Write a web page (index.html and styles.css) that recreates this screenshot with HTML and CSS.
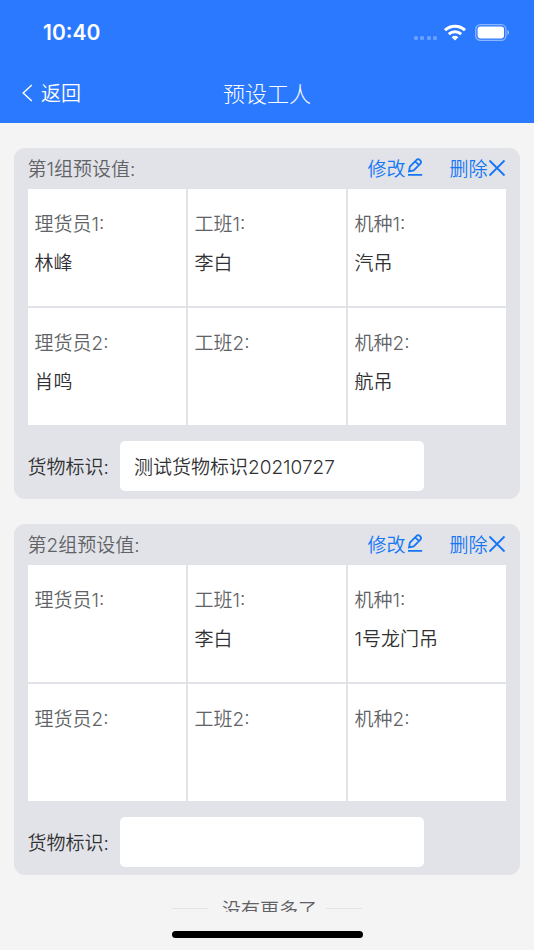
FILE: index.html
```html
<!DOCTYPE html>
<html lang="zh-CN">

<head>
    <meta charset="UTF-8">
    <meta name="viewport" content="width=device-width, initial-scale=1.0">
    <title>预设工人</title>
    <link rel="stylesheet" href="styles.css">
</head>

<body>
    <div id="app">
        <header class="header">
            <!-- 状态栏 -->
            <div class="status">
                <span class="time">10:40</span>
                <div class="status-icons">
                    <div class="dots"><i></i><i></i><i></i><i></i></div>
                    <svg class="wifi" viewBox="0 0 22 17" fill="none" stroke="#fff" stroke-width="3">
                        <path d="M1 6.2C6.6 .8 15.4 .8 21 6.2" />
                        <path d="M4.8 10.2C8.4 6.9 13.6 6.9 17.2 10.2" />
                        <path d="M7.7 13.3Q11 10.4 14.3 13.3L11 16.6Z" fill="#fff" stroke="none" />
                    </svg>
                    <svg class="battery" viewBox="0 0 35 17">
                        <rect x=".7" y=".7" width="30.2" height="15.6" rx="4.6" fill="none" stroke="#fff" stroke-opacity=".45" stroke-width="1.3" />
                        <rect x="2.6" y="2.6" width="26.4" height="11.8" rx="2.8" fill="#fff" />
                        <path d="M32.4 6v5c2.2-.8 2.2-4.2 0-5z" fill="#fff" fill-opacity=".5" />
                    </svg>
                </div>
            </div>
            <!-- 导航栏 -->
            <div class="nav">
                <a class="back">
                    <svg viewBox="0 0 11 18" fill="none" stroke="#fff" stroke-width="1.4">
                        <path d="M9.8 1L1.2 9l8.6 8" />
                    </svg>
                    <span>返回</span>
                </a>
                <h1>预设工人</h1>
            </div>
        </header>

        <main class="list">
            <section class="card">
                <div class="card-head">
                    <span class="title">第1组预设值:</span>
                    <a class="edit">修改<svg viewBox="0 0 16 18"><path d="M2.9 8.6L9.6 1.8Q11.1 .5 12.6 1.8L13.4 2.6Q14.7 4.1 13.4 5.6L6.7 12.4L2 13.4ZM8.3 3.4L11.8 6.9M1 16.8H15.2" /></svg></a>
                    <a class="del">删除<svg viewBox="0 0 18 18"><path d="M1.5 1.5L16.5 16.5M16.5 1.5L1.5 16.5" /></svg></a>
                </div>
                <div class="grid">
                    <div class="cell"><label>理货员1:</label><p>林峰</p></div>
                    <div class="cell"><label>工班1:</label><p>李白</p></div>
                    <div class="cell"><label>机种1:</label><p>汽吊</p></div>
                    <div class="cell"><label>理货员2:</label><p>肖鸣</p></div>
                    <div class="cell"><label>工班2:</label><p></p></div>
                    <div class="cell"><label>机种2:</label><p>航吊</p></div>
                </div>
                <div class="mark">
                    <span>货物标识:</span>
                    <div class="input">测试货物标识20210727</div>
                </div>
            </section>

            <section class="card">
                <div class="card-head">
                    <span class="title">第2组预设值:</span>
                    <a class="edit">修改<svg viewBox="0 0 16 18"><path d="M2.9 8.6L9.6 1.8Q11.1 .5 12.6 1.8L13.4 2.6Q14.7 4.1 13.4 5.6L6.7 12.4L2 13.4ZM8.3 3.4L11.8 6.9M1 16.8H15.2" /></svg></a>
                    <a class="del">删除<svg viewBox="0 0 18 18"><path d="M1.5 1.5L16.5 16.5M16.5 1.5L1.5 16.5" /></svg></a>
                </div>
                <div class="grid">
                    <div class="cell"><label>理货员1:</label><p></p></div>
                    <div class="cell"><label>工班1:</label><p>李白</p></div>
                    <div class="cell"><label>机种1:</label><p>1号龙门吊</p></div>
                    <div class="cell"><label>理货员2:</label><p></p></div>
                    <div class="cell"><label>工班2:</label><p></p></div>
                    <div class="cell"><label>机种2:</label><p></p></div>
                </div>
                <div class="mark">
                    <span>货物标识:</span>
                    <div class="input"></div>
                </div>
            </section>

            <div class="nomore"><span>没有更多了</span></div>
        </main>

        <div class="home-bar"></div>
    </div>
</body>

</html>
```
FILE: styles.css
```css
* {
    margin: 0;
    padding: 0;
    box-sizing: border-box;
}

body {
    font-family: Inter, "Noto Sans CJK SC", sans-serif;
    font-size: 19px;
    font-weight: 350;
    color: #303133;
    background-color: #f4f4f4;
}

#app {
    height: 950px;
    display: flex;
    flex-direction: column;
    overflow: hidden;
}

/* 头部 */
.header {
    height: 122.5px;
    flex-shrink: 0;
    color: #fff;
    background-color: #2b79ff;
}

.status {
    height: 64px;
    padding: 0 25px 0 43px;
    display: flex;
    justify-content: space-between;
    align-items: center;
}

.time {
    font-size: 21px;
    font-weight: 600;
}

.status-icons {
    display: flex;
    align-items: center;
}

.dots {
    display: flex;
    gap: 2.4px;
    margin: 11px 7px 0 0;
}

.dots i {
    width: 4px;
    height: 4px;
    border-radius: 1.5px;
    background-color: rgba(255, 255, 255, .3);
}

.wifi {
    width: 22px;
    height: 17px;
    margin-right: 9px;
}

.battery {
    width: 35px;
    height: 17px;
    margin-right: -1px;
}

.nav {
    height: 56px;
    padding: 0 22px;
    display: grid;
    grid-template-columns: 1fr auto 1fr;
    align-items: center;
}

.back {
    display: flex;
    align-items: center;
    gap: 8px;
    font-size: 20px;
}

.back svg {
    width: 11px;
    height: 18px;
    margin-top: 2px;
}

.nav h1 {
    font-size: 22px;
    font-weight: 300;
}

/* 列表 */
.list {
    height: 789.5px;
    padding: 25px 14px 0;
    overflow: hidden;
}

.card {
    height: 351px;
    margin-bottom: 25px;
    padding: 0 14px;
    border-radius: 11px;
    background-color: #e2e3e8;
}

.card-head {
    height: 41.5px;
    padding: 0 .5px 2px 0;
    display: flex;
    align-items: center;
    color: #606266;
}

.title {
    flex: 1;
    margin-left: -.5px;
}

.card-head a {
    display: flex;
    align-items: center;
    color: #1677f5;
}

.card-head svg {
    margin-top: 2px;
    fill: none;
    stroke: #1677f5;
    stroke-width: 1.8;
}

.edit svg {
    width: 16px;
    height: 18px;
    margin: 0 26px 0 2px;
}

.del svg {
    width: 18px;
    height: 18px;
}

.grid {
    display: grid;
    grid-template-columns: repeat(3, 1fr);
    grid-auto-rows: 117px;
    gap: 2px;
}

.cell {
    padding: 17px 6.5px 0;
    background-color: #fff;
    line-height: 38.5px;
}

.cell label {
    display: block;
    color: #606266;
}

.mark {
    display: flex;
    align-items: center;
    padding-top: 15.5px;
}

.mark span {
    width: 92px;
    margin-left: -.5px;
}

.input {
    width: 304px;
    height: 50px;
    padding-left: 14.5px;
    border-radius: 5px;
    line-height: 53px;
    background-color: #fff;
}

/* 没有更多 */
.nomore {
    margin-top: -18px;
    display: flex;
    justify-content: center;
    align-items: center;
    height: 54px;
    color: #606266;
}

.nomore span {
    margin: 0 9px 0 14px;
}

.nomore::before,
.nomore::after {
    content: '';
    width: 36px;
    height: 1px;
    background-color: #e4e4e6;
}

.home-bar {
    width: 191px;
    height: 7px;
    margin: 19px auto 0;
    border-radius: 4px;
    background-color: #000;
}
```
